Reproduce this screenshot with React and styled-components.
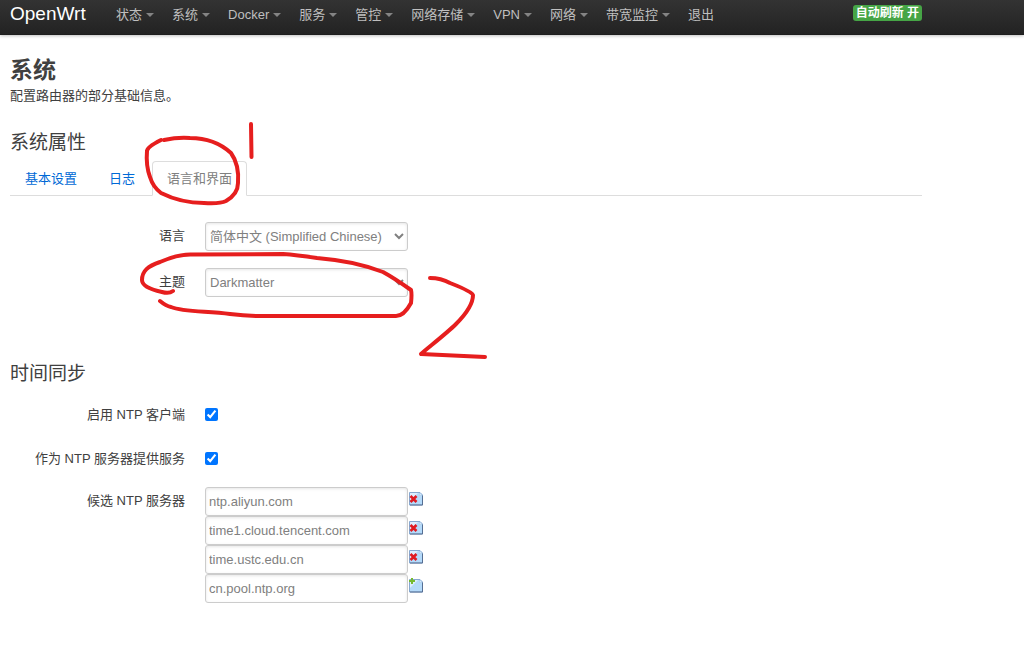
import { useState } from "react";
import styled, { createGlobalStyle } from "styled-components";

const GlobalStyle = createGlobalStyle`
  * {
    box-sizing: border-box;
  }

  body {
    margin: 0;
    background: #fff;
    color: #404040;
    font-family: "Liberation Sans", Arial, "Noto Sans CJK SC", sans-serif;
    font-size: 13px;
    line-height: 18px;
  }

  h2, h3, p {
    margin: 0;
  }
`;

const MENU = [
  { title: "状态", dropdown: true },
  { title: "系统", dropdown: true },
  { title: "Docker", dropdown: true },
  { title: "服务", dropdown: true },
  { title: "管控", dropdown: true },
  { title: "网络存储", dropdown: true },
  { title: "VPN", dropdown: true },
  { title: "网络", dropdown: true },
  { title: "带宽监控", dropdown: true },
  { title: "退出" },
];

const TABS = ["基本设置", "日志", "语言和界面"];

const NTP_SERVERS = [
  "ntp.aliyun.com",
  "time1.cloud.tencent.com",
  "time.ustc.edu.cn",
  "cn.pool.ntp.org",
];

const Header = styled.header`
  background: linear-gradient(#333, #222);
  box-shadow: 0 1px 3px rgba(0, 0, 0, 0.25), inset 0 -1px 0 rgba(0, 0, 0, 0.1);
`;

const HeaderInner = styled.div`
  display: flex;
  align-items: flex-start;
  max-width: 932px;
  height: 35px;
  padding: 0 10px;
`;

const Brand = styled.a`
  width: 97px;
  color: #fff;
  font-size: 19px;
  line-height: 28px;
  text-decoration: none;
`;

const Menu = styled.ul`
  display: flex;
  flex: 1;
  margin: 0;
  padding: 0;
  list-style: none;
`;

const MenuLink = styled.a`
  display: flex;
  align-items: center;
  gap: 4px;
  padding: 6px 9px;
  color: #bfbfbf;
  text-decoration: none;
  white-space: nowrap;

  &:hover {
    color: #fff;
  }
`;

const Caret = styled.span`
  border: 4px solid transparent;
  border-top-color: currentColor;
  border-bottom: 0;
  opacity: 0.6;
`;

const RefreshBadge = styled.button`
  margin-top: 5px;
  padding: 0 3px;
  border: 0;
  border-radius: 3px;
  background: #46a546;
  color: #fff;
  font: bold 12px/16px "Liberation Sans", Arial, "Noto Sans CJK SC", sans-serif;
  white-space: nowrap;
  cursor: pointer;
`;

const Main = styled.main`
  max-width: 932px;
  padding: 18px 10px 40px;
`;

const PageTitle = styled.h2`
  font-size: 23px;
  line-height: 34px;
`;

const Section = styled.section`
  margin-top: ${({ $gap }) => $gap}px;
`;

const SectionTitle = styled.h3`
  color: #404040;
  font-size: 19px;
  font-weight: normal;
  line-height: 36px;
`;

const TabList = styled.div`
  display: flex;
  margin-bottom: 26px;
  border-bottom: 1px solid #ddd;
`;

const Tab = styled.button`
  margin: 0 2px -1px 0;
  padding: 0 14px;
  border: 1px solid ${({ $active }) => ($active ? "#ddd" : "transparent")};
  border-bottom-color: ${({ $active }) => ($active ? "#fff" : "transparent")};
  border-radius: 4px 4px 0 0;
  background: ${({ $active }) => ($active ? "#fff" : "transparent")};
  color: ${({ $active }) => ($active ? "#808080" : "#0069d6")};
  font: inherit;
  line-height: 33px;
  cursor: pointer;
`;

const Fields = styled.div`
  padding-top: ${({ $top }) => $top || 0}px;
`;

const Row = styled.div`
  display: grid;
  grid-template-columns: 175px 1fr;
  column-gap: 20px;
  margin-bottom: ${({ $gap }) => $gap || 17}px;
`;

const RowLabel = styled.label`
  padding-top: 5px;
  text-align: right;
`;

const Field = styled.input`
  display: block;
  width: 203px;
  height: 29px;
  padding: 3px;
  border: 1px solid #ccc;
  border-radius: 3px;
  background: #fff;
  box-shadow: inset 0 1px 3px rgba(0, 0, 0, 0.1);
  color: #808080;
  font: inherit;
`;

// the browser already insets the text of a select
const Select = styled(Field).attrs({ as: "select" })`
  padding: 3px 0;
`;

const CheckBox = styled.input`
  width: 13px;
  height: 13px;
  margin: 7px 0;
`;

const ServerRow = styled.div`
  display: flex;
  align-items: flex-start;
`;

const IconButton = styled.button`
  display: flex;
  margin-top: 4px;
  padding: 0 1px;
  border: 0;
  background: none;
  cursor: pointer;
`;

const Ink = styled.svg`
  position: absolute;
  top: 0;
  left: 0;
  pointer-events: none;
`;

const PageIcon = ({ add }) => (
  <svg width="14" height="15" viewBox="0 0 14 15" aria-hidden="true">
    <path d="M.5 1.5H11L13.5 4V14H.5Z" fill="#b4dafa" stroke="#86a8d0" />
    <path d="M1 2H9L1 10Z" fill="#dceefe" />
    <path d="M13.5 4.500V14H1" fill="none" stroke="#566e92" />
    <path d="M10.500 2V4.500H13Z" fill="#f4faff" stroke="#a5c6e6" strokeWidth=".6" />
    {add ? (
      <path d="M3 0V6M0 3H6" stroke="#76bb30" strokeWidth="2" />
    ) : (
      <path d="M1.500 5L7.500 11M7.500 5L1.500 11" stroke="#e01b22" strokeWidth="2.600" />
    )}
  </svg>
);

const Annotations = () => (
  <Ink
    width="500"
    height="370"
    fill="none"
    stroke="#e61e1e"
    strokeWidth="4"
    strokeLinecap="round"
    strokeLinejoin="round"
    aria-hidden="true"
  >
    <path d="M161 140Q147 147 147 151C146 163 147 169 150 177Q153 187 161 193C173 199 188 203 204 203Q220 204 226 201Q238 194 238 183C239 170 236 160 231 153C220 143 205 138 190 138Q178 137 164 140" />
    <path d="M251 124L251.500 157" />
    <path d="M173 291Q169 294 162 292C148 289 142 285 142 280C142 271 148 266 160 262Q178 254 192 254.500L283 254Q296 255 317 258C343 260 362 264 383 272Q394 278 411 290Q412 294 411 303Q404 316 396 316L260 316Q245 316 230 314C205 311 183 312 171 307Q166 306 160 301" />
    <path d="M430 278Q441 278 450 283Q473 292 473 295C473 303 466 314 456 324C446 334 425 350 421 354L485 357" />
  </Ink>
);

const App = () => {
  const [tab, setTab] = useState("语言和界面");

  return (
    <>
      <GlobalStyle />
      <Header>
        <HeaderInner>
          <Brand href="#">OpenWrt</Brand>
          <Menu>
            {MENU.map(({ title, dropdown }) => (
              <li key={title}>
                <MenuLink href="#">
                  {title}
                  {dropdown && <Caret />}
                </MenuLink>
              </li>
            ))}
          </Menu>
          <RefreshBadge type="button">自动刷新 开</RefreshBadge>
        </HeaderInner>
      </Header>

      <Main>
        <PageTitle>系统</PageTitle>
        <p>配置路由器的部分基础信息。</p>

        <Section $gap={20}>
          <SectionTitle>系统属性</SectionTitle>
          <TabList role="tablist">
            {TABS.map((name) => (
              <Tab
                key={name}
                type="button"
                role="tab"
                aria-selected={name === tab}
                $active={name === tab}
                onClick={() => setTab(name)}
              >
                {name}
              </Tab>
            ))}
          </TabList>
          <Fields>
            <Row>
              <RowLabel htmlFor="lang">语言</RowLabel>
              <Select id="lang">
                <option>简体中文 (Simplified Chinese)</option>
              </Select>
            </Row>
            <Row>
              <RowLabel htmlFor="theme">主题</RowLabel>
              <Select id="theme">
                <option>Darkmatter</option>
              </Select>
            </Row>
          </Fields>
        </Section>

        <Section $gap={59}>
          <SectionTitle>时间同步</SectionTitle>
          <Fields $top={9}>
            <Row>
              <RowLabel htmlFor="ntp-client">启用 NTP 客户端</RowLabel>
              <CheckBox type="checkbox" id="ntp-client" defaultChecked />
            </Row>
            <Row $gap={15}>
              <RowLabel htmlFor="ntp-server">作为 NTP 服务器提供服务</RowLabel>
              <CheckBox type="checkbox" id="ntp-server" defaultChecked />
            </Row>
            <Row>
              <RowLabel id="ntp-label" htmlFor="ntp-0">候选 NTP 服务器</RowLabel>
              <div>
                {NTP_SERVERS.map((server, i) => {
                  const last = i === NTP_SERVERS.length - 1;
                  return (
                    <ServerRow key={server}>
                      <Field id={`ntp-${i}`} aria-labelledby="ntp-label" defaultValue={server} />
                      <IconButton type="button" aria-label={last ? "添加" : "删除"}>
                        <PageIcon add={last} />
                      </IconButton>
                    </ServerRow>
                  );
                })}
              </div>
            </Row>
          </Fields>
        </Section>
      </Main>
      <Annotations />
    </>
  );
};

export default App;
